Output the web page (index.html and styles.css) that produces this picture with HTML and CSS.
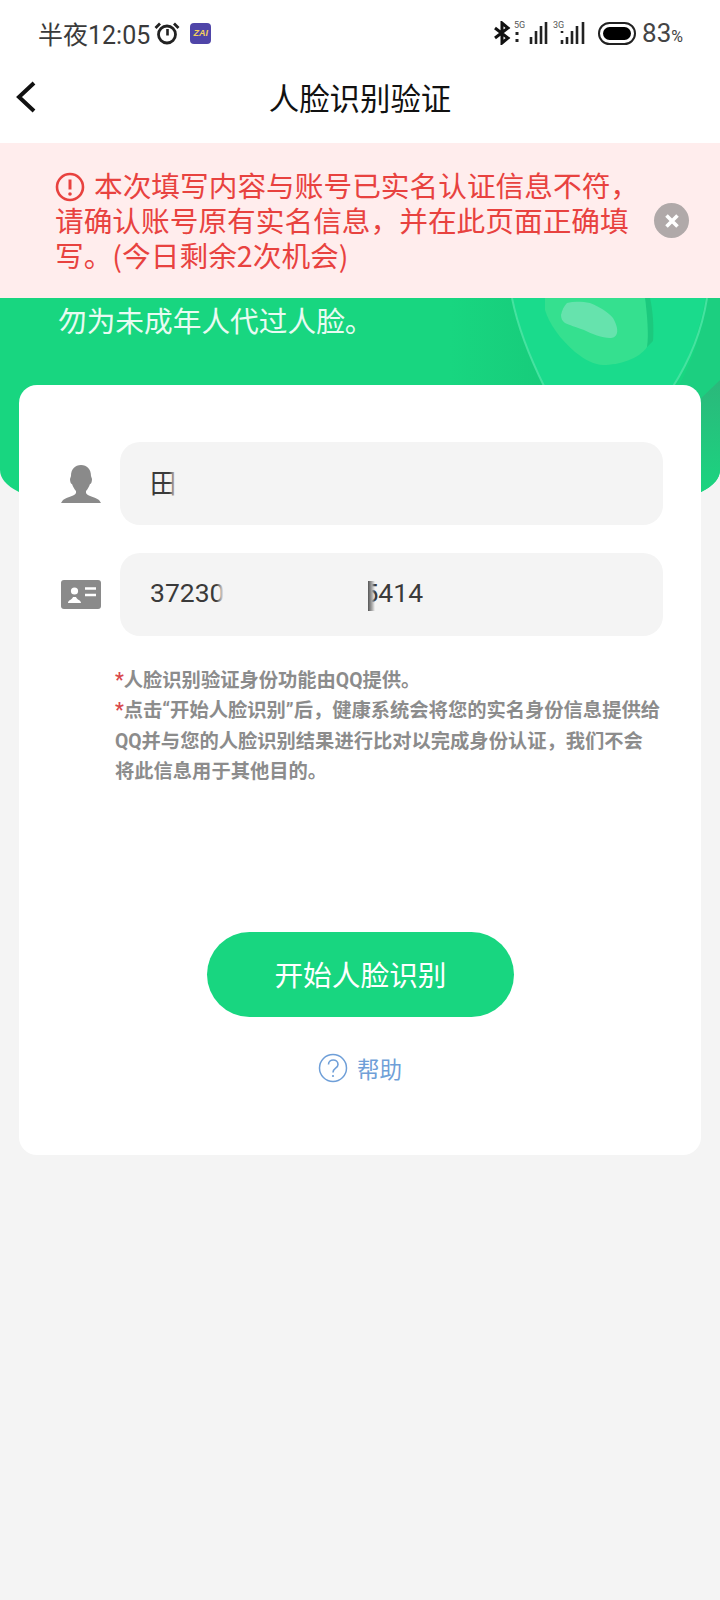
FILE: index.html
```html
<!DOCTYPE html>
<html lang="zh-CN">
<head>
  <meta charset="UTF-8">
  <title>人脸识别验证</title>
  <link rel="stylesheet" href="styles.css">
</head>
<body>
  <div class="status-bar">
    <div class="status-left">
      <span class="status-time">半夜12:05</span>
      <svg class="alarm-icon" width="26" height="24" viewBox="0 0 26 24">
        <circle cx="13" cy="13.500" r="8.500" fill="none" stroke="#222" stroke-width="2.800"/>
        <path d="M13.500 8v6.500" stroke="#222" stroke-width="2.600" fill="none"/>
        <path d="M1.500 7 6 2.500M24.500 7 20 2.500" stroke="#222" stroke-width="2.800" fill="none"/>
      </svg>
      <span class="zai-badge">ZAI</span>
    </div>
    <div class="status-right">
      <svg width="18" height="24" viewBox="0 0 18 24">
        <path d="M2 7l13 10-6 5V2l6 5L2 17" fill="none" stroke="#111" stroke-width="3"/>
      </svg>
      <div class="signal">
        <span class="signal-label">5G</span>
        <svg width="36" height="22" viewBox="0 0 36 22">
          <path d="M4 10v3M4 17v3" stroke="#222" stroke-width="3"/>
          <path d="M18 15v7M23 9v13M28 4v18M33 0v22" stroke="#222" stroke-width="2.600"/>
        </svg>
      </div>
      <div class="signal">
        <span class="signal-label">3G</span>
        <svg width="36" height="22" viewBox="0 0 36 22">
          <path d="M9 9v2" stroke="#222" stroke-width="2.600"/>
          <path d="M9 18v4M14 15v7M19 9v13M24 4v18M30 0v22" stroke="#222" stroke-width="2.600"/>
        </svg>
      </div>
      <div class="battery"><div class="battery-fill"></div></div>
      <span class="battery-text">83<small>%</small></span>
    </div>
  </div>

  <div class="nav-bar">
    <svg class="back-icon" width="22" height="34" viewBox="0 0 22 34">
      <path d="M19 3 4 17l15 14" fill="none" stroke="#111" stroke-width="4"/>
    </svg>
    <h1>人脸识别验证</h1>
  </div>

  <div class="alert">
    <p class="alert-text">
      <svg class="alert-icon" width="30" height="30" viewBox="0 0 30 30">
        <circle cx="15" cy="15" r="13" fill="none" stroke="#e8423f" stroke-width="2.600"/>
        <path d="M15 7.500v10" stroke="#e8423f" stroke-width="3"/>
        <circle cx="15" cy="22" r="1.800" fill="#e8423f"/>
      </svg>本次填写内容与账号已实名认证信息不符，请确认账号原有实名信息，并在此页面正确填写。(今日剩余2次机会)
    </p>
    <div class="alert-close">
      <svg width="16" height="16" viewBox="0 0 16 16">
        <path d="M2.500 2.500l11 11M13.500 2.500l-11 11" stroke="#fff" stroke-width="3.600"/>
      </svg>
    </div>
  </div>

  <div class="hero">
    <svg class="hero-art" width="720" height="202" viewBox="0 0 720 202">
      <defs>
        <linearGradient id="cornerShade" x1="0" y1="0" x2="0" y2="1">
          <stop offset="0" stop-color="#2bb87b"/>
          <stop offset="1" stop-color="#1ad680"/>
        </linearGradient>
        <linearGradient id="ringShade" x1="0" y1="0" x2="1" y2="0">
          <stop offset="0" stop-color="#18d680"/>
          <stop offset="1" stop-color="#17cc7b"/>
        </linearGradient>
      </defs>
      <path d="M450 0h62c6 30 18 60 33 90h-95z" fill="url(#ringShade)"/>
      <path d="M707 0h13v82l-20 18H672c18-30 30-62 35-100z" fill="#1ccf80"/>
      <path d="M720 82 701 100V202H720Z" fill="url(#cornerShade)"/>
      <path d="M512 0c6 30 18 60 33 90H672c18-30 30-62 35-100z" fill="#1adb8c"/>
      <path d="M512 0c6 30 18 60 33 90M707 0c-5 32-17 62-35 90" fill="none" stroke="#45e2a0" stroke-width="2"/>
      <path d="M650 0h-5c2 24 2 40 2 49l6-6c1-14 0-30-3-43z" fill="#1cc97e"/>
      <path d="M545 0v12c4 14 16 30 30 42 10 8 20 13 28 13 16 0 36-6 44-18 2-12 0-34-2-49z" fill="#35e08f"/>
      <path d="M561 17c1-5 3-9 6-12 8-2 16-1 23 0 10 4 18 9 23 15 3 5 5 11 4 15-1 4-4 5-7 5-8 0-18-4-26-8-8-3-15-5-19-7-3-2-4-5-4-8z" fill="#66e3ad"/>
    </svg>
    <p class="hero-text">勿为未成年人代过人脸。</p>
  </div>

  <div class="card">
    <div class="field-row">
      <svg class="field-icon" width="42" height="40" viewBox="0 0 42 40">
        <path d="M21 1c6 0 10 4 10 11l1 3c0 3-1 5-2 5-1 3-3 6-4 7v2c1 3 9 4 13 7l2 3H1l2-3c4-3 12-4 13-7v-2c-1-1-3-4-4-7-1 0-2-2-2-5l1-3C11 5 15 1 21 1z" fill="#8a8a8a"/>
      </svg>
      <div class="field-box"><span class="faded">田</span></div>
    </div>
    <div class="field-row">
      <svg class="field-icon" width="42" height="30" viewBox="0 0 42 30">
        <rect x="1" width="40" height="29" rx="3" fill="#8a8a8a"/>
        <circle cx="14.500" cy="11" r="3.600" fill="#fff"/>
        <path d="M8 23c0-3 4-3 5-6h3c1 3 5 3 5 6z" fill="#fff"/>
        <path d="M25 8.500h11M25 15h11" stroke="#fff" stroke-width="2.400"/>
      </svg>
      <div class="field-box">
        <span class="faded">37230</span>
        <span class="number-tail">5414</span>
      </div>
    </div>

    <div class="notes">
      <p><span class="star">*</span>人脸识别验证身份功能由QQ提供。</p>
      <p><span class="star">*</span>点击“开始人脸识别”后，健康系统会将您的实名身份信息提供给QQ并与您的人脸识别结果进行比对以完成身份认证，我们不会将此信息用于其他目的。</p>
    </div>

    <button class="start-button">开始人脸识别</button>

    <div class="help-link">
      <svg width="30" height="30" viewBox="0 0 30 30">
        <circle cx="15" cy="15" r="13.500" fill="none" stroke="#6f9fd8" stroke-width="1.500"/>
        <path d="M10.500 11.500c0-6 9.500-6 9.500 0 0 4-5 3.500-5 8" fill="none" stroke="#6f9fd8" stroke-width="1.600"/>
        <circle cx="15" cy="23" r="1.100" fill="#6f9fd8"/>
      </svg>
      <span>帮助</span>
    </div>
  </div>
</body>
</html>
```

FILE: styles.css
```css
* {
  box-sizing: border-box;
}
body {
  margin: 0;
  background-color: #f4f4f4;
  font-family: "Noto Sans CJK SC", Roboto, sans-serif;
  color: #333;
}
p, h1 {
  margin: 0;
}
.status-bar {
  height: 70px;
  padding: 0 37px 4px 38px;
  background: white;
  display: flex;
  justify-content: space-between;
  align-items: center;
}
.status-left,
.status-right {
  display: flex;
  align-items: center;
}
.status-time {
  font-family: Roboto, "Noto Sans CJK SC", sans-serif;
  font-size: 25px;
  color: #3a3a3a;
}
.alarm-icon {
  margin-left: 4px;
}
.zai-badge {
  width: 21px;
  height: 21px;
  margin-left: 10px;
  border-radius: 4px;
  background-color: #4f45a8;
  color: #f4cf5c;
  font-family: "Liberation Sans", sans-serif;
  font-size: 9px;
  font-weight: bold;
  font-style: italic;
  line-height: 21px;
  text-align: center;
}
.status-right {
  gap: 2px;
}
.signal {
  position: relative;
  width: 36px;
  height: 22px;
  margin-right: 2px;
}
.signal svg {
  display: block;
}
.signal-label {
  position: absolute;
  left: 1px;
  top: -2px;
  font-family: Roboto, sans-serif;
  font-size: 9px;
  line-height: 10px;
  color: #555;
}
.signal + .signal .signal-label {
  left: 0;
}
.battery {
  width: 38px;
  height: 23px;
  margin-left: 5px;
  padding: 3px;
  border: 2px solid #222;
  border-radius: 12px;
}
.battery-fill {
  width: 28px;
  height: 13px;
  background-color: #000;
  border-radius: 7px;
}
.battery-text {
  margin-left: 4px;
  font-family: Roboto, sans-serif;
  font-size: 26px;
  color: #444;
}
.battery-text small {
  font-size: 16px;
}
.nav-bar {
  position: relative;
  height: 73px;
  background: white;
  display: flex;
  align-items: center;
  justify-content: center;
}
.nav-bar h1 {
  font-size: 30.400px;
  font-weight: normal;
  color: #111;
  margin-top: -19px;
}
.back-icon {
  position: absolute;
  left: 15px;
  top: 10px;
}
.alert {
  height: 155px;
  padding: 0 31px 3px 55px;
  background-color: #ffeded;
  display: flex;
  align-items: center;
}
.alert-text {
  width: 590px;
  font-size: 28.700px;
  line-height: 35px;
  color: #e8423f;
}
.alert-icon {
  vertical-align: -5px;
  margin-right: 9px;
}
.alert-close {
  width: 35px;
  height: 35px;
  margin: 3px 0 0 auto;
  border-radius: 50%;
  background-color: #b0a9a9;
  display: flex;
  align-items: center;
  justify-content: center;
}
.hero {
  position: relative;
  height: 202px;
  padding: 4px 58px;
  background-color: #18d680;
  border-radius: 0 0 60px 60px / 0 0 30px 30px;
  overflow: hidden;
}
.hero-art {
  position: absolute;
  left: 0;
  top: 0;
}
.hero-text {
  position: relative;
  font-size: 28.700px;
  line-height: 36px;
  color: #e8fbf2;
}
.card {
  position: relative;
  height: 770px;
  margin: -115px 19px 0;
  padding: 57px 38px 0 41px;
  background: white;
  border-radius: 18px;
}
.field-row {
  display: flex;
  align-items: center;
  margin-bottom: 28px;
}
.field-icon {
  flex: none;
  margin-right: 18px;
}
.field-box {
  flex: 1;
  height: 83px;
  padding: 0 0 4px 30px;
  background-color: #f4f4f4;
  border-radius: 20px;
  display: flex;
  align-items: center;
  font-family: Roboto, "Noto Sans CJK SC", sans-serif;
  font-size: 26.500px;
  color: #3a3a3a;
}
.faded {
  position: relative;
}
.faded::after {
  content: "";
  position: absolute;
  right: 0;
  top: 0;
  bottom: 0;
  width: 8px;
  background: linear-gradient(to right, rgba(244, 244, 244, 0), #f4f4f4);
}
.number-tail {
  position: relative;
  margin-left: 139px;
}
.number-tail::before {
  content: "";
  position: absolute;
  left: 0;
  top: 4px;
  width: 13px;
  height: 30px;
  background: linear-gradient(to right, #f4f4f4 5px, #555 5px, #aaa 9px, rgba(244, 244, 244, 0) 12px);
}
.notes {
  margin-top: 30px;
  padding: 0 2px 0 55px;
  font-family: Roboto, "Noto Sans CJK SC", sans-serif;
  font-size: 19.300px;
  line-height: 30.400px;
  font-weight: bold;
  color: #8c8c8c;
}
.star {
  color: #d9484c;
}
.start-button {
  display: block;
  position: relative;
  left: -1px;
  width: 307px;
  height: 85px;
  margin: 144px auto 0;
  padding-bottom: 3px;
  border: none;
  border-radius: 43px;
  background-color: #18d680;
  color: white;
  font-family: inherit;
  font-size: 28.700px;
}
.help-link {
  display: flex;
  align-items: center;
  justify-content: center;
  gap: 9px;
  margin-top: 35px;
  padding-right: 3px;
  color: #6f9fd8;
  font-size: 22.500px;
}
```
